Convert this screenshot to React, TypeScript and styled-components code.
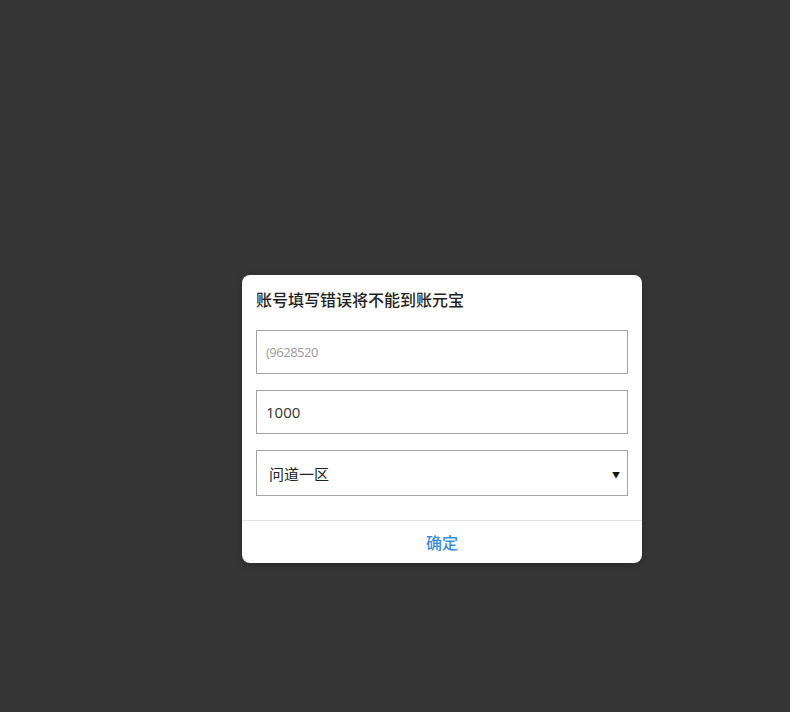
import React from 'react';
import styled, { createGlobalStyle } from 'styled-components';

const GlobalStyle = createGlobalStyle`
  html, body {
    margin: 0;
    padding: 0;
    background: #363636;
    font-family: "Noto Sans CJK SC", "Noto Sans", "Liberation Sans", sans-serif;
  }
`;

const Page = styled.div`
  min-height: 712px;
  padding: 275px 0 0 242px;
  box-sizing: border-box;
`;

const Dialog = styled.div`
  width: 400px;
  background: #fff;
  border-radius: 8px;
  overflow: hidden;
  box-shadow: 0 2px 8px rgba(0, 0, 0, 0.25);
`;

const Body = styled.div`
  padding: 12px 14px 24px 14px;
  display: flex;
  flex-direction: column;
`;

const Title = styled.h3`
  margin: 0 0 19px;
  font-size: 16px;
  line-height: 24px;
  font-weight: 500;
  color: #1f1f1f;
`;

const Field = styled.div<{ $h: number; $muted?: boolean }>`
  height: ${({ $h }) => $h}px;
  box-sizing: border-box;
  border: 1px solid #a3a3a3;
  display: flex;
  align-items: center;
  padding: 0 9px;
  font-size: 15px;
  color: ${({ $muted }) => ($muted ? '#9a9a9a' : '#333')};
  & + & {
    margin-top: 16px;
  }
`;

const NumText = styled.span<{ $small?: boolean }>`
  font-family: "Open Sans", "Liberation Sans", sans-serif;
  font-size: ${({ $small }) => ($small ? '13px' : '15px')};
  letter-spacing: ${({ $small }) => ($small ? '-0.5px' : '0')};
`;

const SelectBox = styled(Field)`
  justify-content: space-between;
  padding: 0 7px 0 12px;
  color: #222;
`;

const Caret = styled.span`
  font-size: 8px;
  color: #111;
  padding-top: 2px;
`;

const Footer = styled.div`
  border-top: 1px solid #e3e3e3;
  height: 42px;
  display: flex;
  align-items: center;
  justify-content: center;
  color: #3a8ee0;
  font-size: 16px;
  font-weight: 500;
`;

const App: React.FC = () => (
  <>
    <GlobalStyle />
    <Page>
      <Dialog>
        <Body>
          <Title>账号填写错误将不能到账元宝</Title>
          <Field $h={44} $muted>
            <NumText $small>(9628520</NumText>
          </Field>
          <Field $h={44}>
            <NumText>1000</NumText>
          </Field>
          <SelectBox $h={46}>
            <span>问道一区</span>
            <Caret>▼</Caret>
          </SelectBox>
        </Body>
        <Footer>确定</Footer>
      </Dialog>
    </Page>
  </>
);

export default App;
